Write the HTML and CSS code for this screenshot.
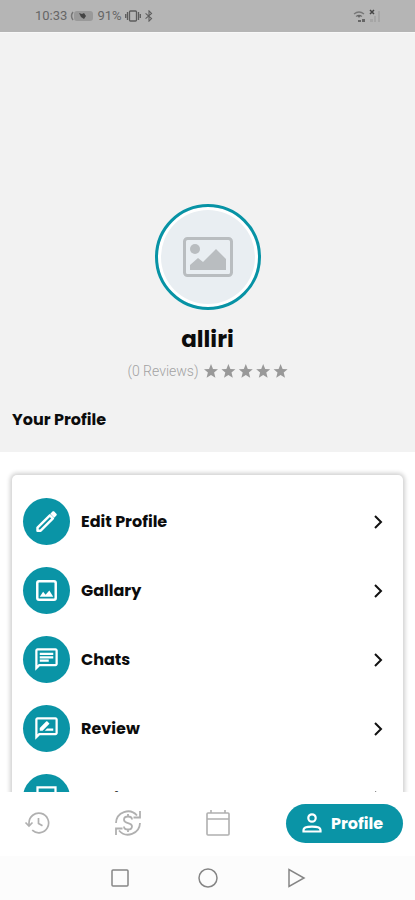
FILE: index.html
```html
<!DOCTYPE html>
<html lang="en">
<head>
<meta charset="utf-8">
<meta name="viewport" content="width=device-width, initial-scale=1">
<title>Profile</title>
<link rel="stylesheet" href="styles.css">
</head>
<body>
<div class="status">
  <div class="status-group">
    <span>10:33</span>
    <svg width="24" height="12" viewBox="0 0 24 12"><path d="M3 2Q0 6 3 10" fill="none" stroke="#777" stroke-width="1.5"/><rect x="4" y="1" width="19" height="10" rx="3" fill="#999"/><path d="M9 3l3 1 2-1 2 3-2 3-3-2z" fill="#444"/></svg>
    <span>91%</span>
    <svg width="16" height="12" viewBox="0 0 16 12" fill="none" stroke="#5c5c5c" stroke-width="1.3"><rect x="4.5" y="1" width="7" height="10" rx="1"/><path d="M2.500 2v8M13.500 2v8M.7 4v4M15.300 4v4"/></svg>
    <svg width="10" height="12" viewBox="0 0 10 14" fill="none" stroke="#5c5c5c" stroke-width="1.2"><path d="M1 4l7 6-3 3V1l3 3-7 6"/></svg>
  </div>
  <svg width="30" height="16" viewBox="0 0 30 16"><path d="M1 6q5-4 10 0M3 8.500q3-2 6 0" fill="none" stroke="#777" stroke-width="1.3"/><path d="M4 7h4l-2 3zM5 12h3v2H5zM9 11h3v3H9z" fill="#666"/><path d="M17 2l4 4m0-4l-4 4" stroke="#444" stroke-width="1.5"/><path d="M17 14v-3h3v3zM21 14V8h2v6zM25 14V3h2v11z" fill="#a6a6a6"/></svg>
</div>
<main class="content">
  <header class="hero">
    <div class="avatar">
      <svg width="50" height="40" viewBox="0 0 50 40"><rect x="1.500" y="1.500" width="47" height="37" rx="3" fill="none" stroke="#b9bdc0" stroke-width="3"/><circle cx="12" cy="12" r="5" fill="#b9bdc0"/><path d="M7 33v-5l8-7 5 4 13-13 10 10v11z" fill="#b9bdc0"/></svg>
    </div>
    <h1 class="name">alliri</h1>
    <div class="rating">
      <span>(0 Reviews)</span>
      <svg width="84" height="14" viewBox="0 0 84 14" fill="#999"><defs><path id="star" d="M7 0l2 4.900 5 .4-3.900 3.300 1.300 5.100L7 11l-4.400 2.700 1.300-5.100L0 5.300l5-.4z"/></defs><use href="#star"/><use href="#star" x="17.400"/><use href="#star" x="34.800"/><use href="#star" x="52.200"/><use href="#star" x="69.600"/></svg>
    </div>
    <h2 class="section-title">Your Profile</h2>
  </header>
  <nav class="card" aria-label="Profile menu">
    <a class="row" href="#edit"><span class="disc"><svg class="icon" viewBox="0 0 24 24"><path d="M4 20.200v-2.800L15 6.600l2.700 2.700L6.800 20.200z" fill="none" stroke="#fff" stroke-width="2.200" stroke-linejoin="round"/><path d="M15.400 5.100l1.900-1.900c.5-.5 1.100-.5 1.600 0l1.900 1.900c.5.5.5 1.100 0 1.600l-1.900 1.900z"/></svg></span><span class="label">Edit Profile</span><svg class="chevron" viewBox="0 0 10 14"><path d="M2 1l6 6-6 6"/></svg></a>
    <a class="row" href="#gallery"><span class="disc"><svg class="icon" viewBox="0 0 24 24"><rect x="3.800" y="3.800" width="16.400" height="16.400" rx="1.500" fill="none" stroke="#fff" stroke-width="2.200"/><path d="M6 17.500l3-4.500 2.200 2.800L14.500 12l3.500 5.500z"/></svg></span><span class="label">Gallary</span><svg class="chevron" viewBox="0 0 10 14"><path d="M2 1l6 6-6 6"/></svg></a>
    <a class="row" href="#chats"><span class="disc"><svg class="icon" viewBox="0 0 24 24"><path d="M4 2h16c1.100 0 2 .9 2 2v12c0 1.100-.9 2-2 2H6l-4 4V4c0-1.100.9-2 2-2zm0 2v13.170L5.170 16H20V4H4zm2 8h8v2H6zm0-3h12v2H6zm0-3h12v2H6z"/></svg></span><span class="label">Chats</span><svg class="chevron" viewBox="0 0 10 14"><path d="M2 1l6 6-6 6"/></svg></a>
    <a class="row" href="#review"><span class="disc"><svg class="icon" viewBox="0 0 24 24"><path d="M20 2H4c-1.100 0-2 .9-2 2v18l4-4h14c1.100 0 2-.9 2-2V4c0-1.100-.9-2-2-2zm0 14H5.170L4 17.170V4h16v12zM10.500 14H18v-2h-5.500zM6 14h2.500l5.900-5.900c.2-.2.2-.5 0-.7l-1.800-1.800c-.2-.2-.5-.2-.7 0L6 11.500z"/></svg></span><span class="label">Review</span><svg class="chevron" viewBox="0 0 10 14"><path d="M2 1l6 6-6 6"/></svg></a>
    <a class="row" href="#product"><span class="disc"><svg class="icon" viewBox="0 0 24 24"><path d="M3 2h18v19H3zm2 2v15h14V4z"/></svg></span><span class="label">Product</span><svg class="chevron" viewBox="0 0 10 14"><path d="M2 1l6 6-6 6"/></svg></a>
  </nav>
</main>
<nav class="tabs" aria-label="Main">
  <div class="tab-icons">
    <a href="#history" aria-label="History"><svg width="26" height="26" viewBox="0 0 26 26" fill="none" stroke="#b0b0b0" stroke-width="1.7"><path d="M5 14.500V13a9.800 9.800 0 1 1 3.200 7.200M1.500 12.500L5 16l3.500-3.500M14.500 8v5.500l4 2.300"/></svg></a>
    <a href="#payments" aria-label="Payments"><svg width="28" height="28" viewBox="0 0 28 28" fill="none" stroke="#b0b0b0" stroke-width="1.8"><path d="M2 14A12 12 0 0 1 23 6.500M26 14A12 12 0 0 1 5 21.500M26 2v6.500h-6.500M2 26v-6.500h6.500M18 10.500c0-2-2-3-4-3s-4 1-4 3.200c0 4.500 8 2.200 8 6.500 0 2.300-2 3.300-4 3.300s-4-1-4-3M14 5v3M14 20v3"/></svg></a>
    <a href="#calendar" aria-label="Calendar"><svg width="24" height="26" viewBox="0 0 24 26" fill="none" stroke="#b0b0b0" stroke-width="1.6"><rect x="1" y="3" width="22" height="22" rx="1"/><path d="M1 9h22M5 0v3M19 0v3"/></svg></a>
  </div>
  <a class="tab-active" href="#profile" aria-current="page"><svg width="20" height="20" viewBox="0 0 20 20" fill="none" stroke="#fff" stroke-width="2.2"><circle cx="10" cy="5" r="3.700"/><path d="M1.500 18.500v-1.500c0-4.500 17-4.500 17 0v1.500z"/></svg><span>Profile</span></a>
</nav>
<div class="system">
  <button aria-label="Recent apps"><svg width="20" height="20" viewBox="0 0 20 20"><rect x="2" y="2" width="16" height="16" rx="1"/></svg></button>
  <button aria-label="Home"><svg width="20" height="20" viewBox="0 0 20 20"><circle cx="10" cy="10" r="9"/></svg></button>
  <button aria-label="Back"><svg width="20" height="20" viewBox="0 0 20 20"><path d="M3 1.500v17L18 10z"/></svg></button>
</div>
</body>
</html>
```
FILE: styles.css
```css
* { box-sizing: border-box; }
body {
  margin: 0;
  height: 100vh;
  display: flex;
  flex-direction: column;
  overflow: hidden;
  background: #fff;
  color: #0c0c0c;
  font-family: Poppins, Inter, sans-serif;
}
svg { display: block; flex: none; }
a { color: inherit; text-decoration: none; }
.status {
  flex: none;
  display: flex;
  align-items: center;
  justify-content: space-between;
  height: 33px;
  padding: 0 32px 0 35px;
  background: #b5b5b5;
  border-bottom: 1px solid #f8f8f8;
  color: #666;
  font: 13px/16px Roboto, sans-serif;
}
.status-group { display: flex; align-items: center; gap: 3px; }
.content { flex: 1; min-height: 0; overflow: hidden; }
.hero {
  display: flex;
  flex-direction: column;
  align-items: center;
  padding: 171px 12px 20px;
  background: #f2f2f2;
}
.avatar {
  display: flex;
  align-items: center;
  justify-content: center;
  width: 106px;
  height: 106px;
  border: 3px solid #0793a5;
  border-radius: 50%;
  background: #e9eef2;
  box-shadow: inset 0 0 0 3px #fff;
}
.name { margin: 13px 0 0; font-size: 23px; line-height: 32px; font-weight: 700; }
.rating {
  display: flex;
  align-items: center;
  gap: 5px;
  margin-top: 6px;
  color: #a2a2a2;
  font: 300 14px/20px Roboto, sans-serif;
}
.section-title {
  align-self: flex-start;
  margin: 27px 0 0;
  font-size: 16px;
  line-height: 24px;
  font-weight: 700;
}
.card {
  margin: 23px 12px 0;
  padding: 12px 20px 12px 11px;
  border-radius: 5px;
  background: #fff;
  box-shadow: 0 0 4px 2px #d0d0d0;
}
.row { display: flex; align-items: center; gap: 11px; height: 69px; }
.disc {
  display: flex;
  align-items: center;
  justify-content: center;
  width: 47px;
  height: 47px;
  border-radius: 50%;
  background: #0a94a6;
}
.icon { width: 27px; height: 27px; fill: #fff; }
.label { flex: 1; font-size: 16px; line-height: 24px; font-weight: 700; }
.chevron { width: 10px; height: 14px; fill: none; stroke: #111; stroke-width: 2; }
.tabs {
  flex: none;
  display: flex;
  align-items: center;
  justify-content: space-between;
  height: 64px;
  padding: 0 12px 2px 24px;
  background: #fff;
}
.tab-icons { display: flex; align-items: center; gap: 64px; }
.tab-active {
  display: flex;
  align-items: center;
  gap: 9px;
  height: 39px;
  padding: 0 20px 0 16px;
  border-radius: 20px;
  background: #0a94a6;
  color: #fff;
  font-size: 16px;
  font-weight: 700;
}
.system {
  flex: none;
  display: flex;
  align-items: center;
  justify-content: center;
  gap: 68px;
  height: 44px;
  padding-bottom: 1px;
  background: #fcfcfc;
}
.system button { padding: 0; border: 0; background: none; }
.system svg { fill: none; stroke: #858585; stroke-width: 1.5; }
```
